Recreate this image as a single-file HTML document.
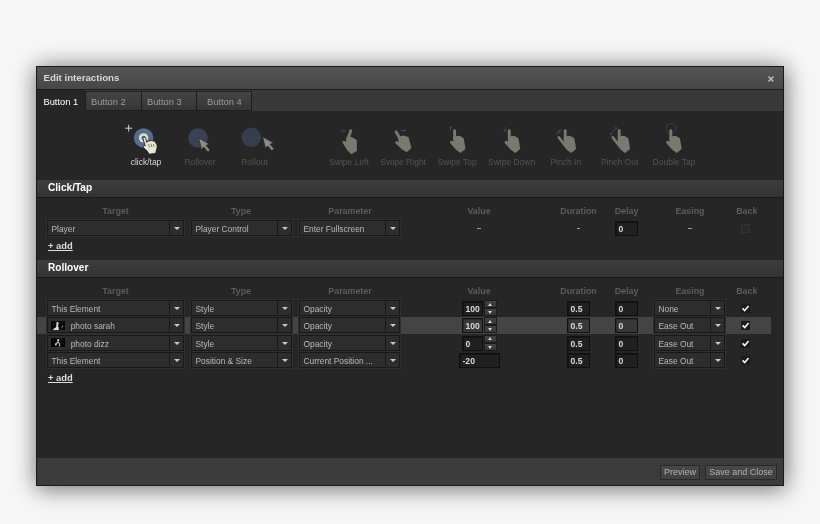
<!DOCTYPE html>
<html>
<head>
<meta charset="utf-8">
<style>
*{box-sizing:border-box;margin:0;padding:0}
html,body{width:820px;height:524px;overflow:hidden}
body{background:#f7f7f7;font-family:"Liberation Sans",sans-serif;font-size:8px;color:#c8c8c8;position:relative}
.abs{position:absolute}
#dlg{will-change:transform;position:absolute;left:36px;top:66px;width:748px;height:420px;background:#262626;border:1px solid #1a1a1a;box-shadow:1px 2px 22px 1px rgba(0,0,0,.55)}
#title{position:absolute;left:0;top:0;width:746px;height:23px;background:linear-gradient(#555,#474747);border-bottom:1px solid #1c1c1c}
#title span{position:absolute;left:6.5px;top:5px;font-weight:bold;font-size:9.7px;line-height:11px;color:#d8d8d8}
#tabs{position:absolute;left:0;top:23px;width:746px;height:21px;background:#393939}
.tab{position:absolute;top:1px;height:20px;background:linear-gradient(#444,#363636);border-left:1px solid #1e1e1e;border-top:1px solid #222;border-bottom:1px solid #1e1e1e;color:#9a9a9a;font-size:9.3px;line-height:20.5px;text-align:left;padding-left:5px;white-space:nowrap}
.tab.act{top:0;background:#262626;color:#fff;border:none;height:21px;padding-left:6.5px;line-height:25px}
#foot{position:absolute;left:0;top:391px;width:746px;height:27px;background:#3b3b3b}
.btn{position:absolute;top:7px;height:14.5px;border:1px solid #292929;background:linear-gradient(#484848,#404040);color:#b2b2b2;font-size:9px;line-height:13px;text-align:center;white-space:nowrap}
.sec{position:absolute;left:0;width:746px;height:18px;background:linear-gradient(#3e3e3e,#333);border-bottom:1px solid #1a1a1a;color:#fff;font-weight:bold;font-size:10.1px;line-height:16.5px;padding-left:11px}
.hd{position:absolute;font-weight:bold;font-size:8.9px;line-height:10px;color:#5c5c5c;text-align:center;width:80px;margin-left:-40px;white-space:nowrap}
.sel{position:absolute;height:16px;border:1px solid #191919;background:#2d2d2d;box-shadow:0 0 0 1px #2f2f2f;color:#b8b8b8;font-size:8.4px;line-height:16px;padding-left:3.5px;white-space:nowrap;overflow:hidden}
.sel i{position:absolute;right:0;top:0;width:14px;height:14px;border-left:1px solid #191919}
.sel i:after{content:"";position:absolute;left:3.5px;top:6px;border:3.5px solid transparent;border-top:3.5px solid #c8c8c8;border-bottom:none}
.inp{position:absolute;height:15px;border:1px solid #101010;background:#202020;box-shadow:inset 1px 1px 0 #141414;color:#dadada;font-weight:bold;font-size:8.6px;line-height:14.5px;padding-left:2.5px;white-space:nowrap}
.inp.hli{background:#383838;box-shadow:inset 1px 1px 0 #2c2c2c}
.add{position:absolute;left:11px;color:#dcdcdc;font-weight:bold;font-size:9.4px;line-height:10px;text-decoration:underline;white-space:nowrap}
.ico{position:absolute;font-size:8.5px;line-height:10px;text-align:center;width:70px;margin-left:-35px;top:90px;white-space:nowrap}

.spin{position:absolute;width:13px;height:16px}
.spin b,.spin u{position:absolute;left:0;width:13px;height:8px;background:linear-gradient(#424242,#363636);border:1px solid #1c1c1c}
.spin b{top:0}.spin u{top:8px}
.spin b:after{content:"";position:absolute;left:3px;top:1.5px;border:2.5px solid transparent;border-bottom:3px solid #cfcfcf;border-top:none}
.spin u:after{content:"";position:absolute;left:3px;top:2px;border:2.5px solid transparent;border-top:3px solid #cfcfcf;border-bottom:none}
.chk{position:absolute;width:9px;height:9px;background:#1b1b1b}
.chk.off{border:1px solid #343434;background:#2a2a2a}
.dash{position:absolute;width:3.5px;height:1.6px;background:#9c9c9c;margin-top:.8px}
.hl{position:absolute;left:0;width:734px;height:17.2px;background:#444}
.th{display:inline-block;width:14.5px;height:9px;vertical-align:top;margin:2.5px 5.5px 0 -0.8px}
</style>
</head>
<body>
<div id="dlg">
  <div id="title"><span>Edit interactions</span><svg class="abs" style="left:730.2px;top:8.2px" width="8" height="8" viewBox="0 0 8 8"><path d="M1.4,1.4 L6.4,6.4 M6.4,1.4 L1.4,6.4" stroke="#bebebe" stroke-width="1.4"/></svg></div>
  <div id="tabs">
    <div class="tab act" style="left:0;width:48px">Button 1</div>
    <div class="tab" style="left:48px;width:56px">Button 2</div>
    <div class="tab" style="left:104px;width:55px">Button 3</div>
    <div class="tab" style="left:159px;width:56px;border-right:1px solid #1e1e1e;padding-left:10px">Button 4</div>
  </div>
  <!--ICONS-->
  <svg class="abs" style="left:0;top:0" width="746" height="418" viewBox="37 67 746 418"><g stroke="#cfcfcf" stroke-width="1" fill="none"><path d="M125.2,128.2 H132.2 M128.7,124.7 V131.7"/></g>
  <circle cx="143.6" cy="137.9" r="9.7" fill="#586c8e"/>
  <circle cx="143.6" cy="137.9" r="4.7" fill="#dcdcd4"/>
  <circle cx="143.6" cy="137.9" r="2.1" fill="#586c8e"/>
  <g transform="translate(115,115)"><path d="M29.2,22.1 Q30.5,22 30.7,23.2 L31.7,27.3 Q33,25.6 34.6,26 Q36.4,24.9 37.6,25.8 Q39.6,25.6 40.3,27.2 Q42.4,29.4 42.2,32 L40.6,38.6 L33.6,39.2 L32.8,36.8 L29,33.2 Q27.4,31.4 28.6,30.6 Q29.6,30.2 30.2,31 L27.9,23.4 Q27.8,22.2 29.2,22.1 Z" fill="#e9e9d2" stroke="#1d1d1d" stroke-width="0.9" stroke-linejoin="round"/><path d="M33.6,29 L34.4,32.6 M36,28.6 L36.8,32.2 M38.4,28.8 L39,32" stroke="#555" stroke-width="0.7" fill="none"/></g>
  <circle cx="198" cy="137.9" r="9.7" fill="#3a4354"/>
  <path transform="translate(198.6,137.9)" d="M0,0 L2.9,11.5 L5.2,9.2 L9.2,14 L11.5,12 L7.4,7.4 L11,6.3 Z" fill="#8b8b82" stroke="#262626" stroke-width="0.7"/>
  <circle cx="251.3" cy="137.3" r="9.7" fill="#363e4d"/>
  <path transform="translate(262.6,136.8)" d="M0,0 L2.9,11.5 L5.2,9.2 L9.2,14 L11.5,12 L7.4,7.4 L11,6.3 Z" fill="#8b8b82" stroke="#262626" stroke-width="0.7"/>
  <g transform="translate(347.8,129.9)" fill="#787a70"><path transform="rotate(9 0 9)" d="M1.4,7 Q3,6 4.2,6.8 Q6,6.6 6.8,7.8 Q8.6,7.8 9.2,9.4 L10.8,19 Q10.8,20 9.7,20.6 L5.9,23.6 L1.5,20.4 L-4.6,13.6 Q-5,12 -3.8,11.6 Q-2.6,11.4 -1.4,12.6 L-1.4,7 Z"/><line x1="0" y1="9" x2="3.0" y2="0.7999999999999999" stroke="#787a70" stroke-width="2.9" stroke-linecap="round"/></g>
  <path d="M341.5,131 H346 M341.5,131 l1.5,-1.3 M341.5,131 l1.5,1.3" stroke="#3f4b63" stroke-width="0.9" fill="none"/>
  <g transform="translate(399.6,129.3)" fill="#787a70"><path transform="rotate(-5 0 9)" d="M1.4,7 Q3,6 4.2,6.8 Q6,6.6 6.8,7.8 Q8.6,7.8 9.2,9.4 L10.8,19 Q10.8,20 9.7,20.6 L5.9,23.6 L1.5,20.4 L-4.6,13.6 Q-5,12 -3.8,11.6 Q-2.6,11.4 -1.4,12.6 L-1.4,7 Z"/><line x1="0" y1="9" x2="-3.4" y2="2.5999999999999996" stroke="#787a70" stroke-width="2.9" stroke-linecap="round"/></g>
  <path d="M401,130.5 H405.5 M405.5,130.5 l-1.5,-1.3 M405.5,130.5 l-1.5,1.3" stroke="#3f4b63" stroke-width="0.9" fill="none"/>
  <g transform="translate(454.6,129.3)" fill="#787a70"><path d="M1.4,7 Q3,6 4.2,6.8 Q6,6.6 6.8,7.8 Q8.6,7.8 9.2,9.4 L10.8,19 Q10.8,20 9.7,20.6 L5.9,23.6 L1.5,20.4 L-4.6,13.6 Q-5,12 -3.8,11.6 Q-2.6,11.4 -1.4,12.6 L-1.4,7 Z"/><line x1="0" y1="9" x2="0" y2="1.4" stroke="#787a70" stroke-width="2.9" stroke-linecap="round"/></g>
  <path d="M450.6,126.5 V131 M450.6,126.5 l-1.2,1.4 M450.6,126.5 l1.2,1.4" stroke="#3f4b63" stroke-width="0.9" fill="none"/>
  <g transform="translate(509.3,129.3)" fill="#787a70"><path d="M1.4,7 Q3,6 4.2,6.8 Q6,6.6 6.8,7.8 Q8.6,7.8 9.2,9.4 L10.8,19 Q10.8,20 9.7,20.6 L5.9,23.6 L1.5,20.4 L-4.6,13.6 Q-5,12 -3.8,11.6 Q-2.6,11.4 -1.4,12.6 L-1.4,7 Z"/><line x1="0" y1="9" x2="0" y2="1.4" stroke="#787a70" stroke-width="2.9" stroke-linecap="round"/></g>
  <path d="M505.2,127 V131.5 M505.2,131.5 l-1.2,-1.4 M505.2,131.5 l1.2,-1.4" stroke="#3f4b63" stroke-width="0.9" fill="none"/>
  <g transform="translate(565.2,129.3)" fill="#787a70"><path d="M1.4,7 Q3,6 4.2,6.8 Q6,6.6 6.8,7.8 Q8.6,7.8 9.2,9.4 L10.8,19 Q10.8,20 9.7,20.6 L5.9,23.6 L1.5,20.4 L-3.2,14.5 L-7.6,8.6 Q-8,7.2 -6.8,6.8 Q-5.8,6.6 -5,7.8 L-1.4,12.4 L-1.4,7 Z"/><line x1="0" y1="9" x2="0" y2="1.4" stroke="#787a70" stroke-width="2.9" stroke-linecap="round"/></g>
  <path d="M556,135 L562,128.5 M558.2,132.6 l0.2,-1.8 M558.2,132.6 l1.8,-0.1 M560.2,130.6 l-1.8,0.1 M560.2,130.6 l-0.2,1.8" stroke="#3f4b63" stroke-width="0.8" fill="none"/>
  <g transform="translate(619.2,129.3)" fill="#787a70"><path d="M1.4,7 Q3,6 4.2,6.8 Q6,6.6 6.8,7.8 Q8.6,7.8 9.2,9.4 L10.8,19 Q10.8,20 9.7,20.6 L5.9,23.6 L1.5,20.4 L-3.2,14.5 L-7.6,8.6 Q-8,7.2 -6.8,6.8 Q-5.8,6.6 -5,7.8 L-1.4,12.4 L-1.4,7 Z"/><line x1="0" y1="9" x2="0" y2="1.4" stroke="#787a70" stroke-width="2.9" stroke-linecap="round"/></g>
  <path d="M610.5,134.5 L616.5,127.5 M610.5,134.5 l0.2,-1.8 M610.5,134.5 l1.8,-0.2 M616.5,127.5 l-1.8,0.2 M616.5,127.5 l-0.2,1.8" stroke="#3f4b63" stroke-width="0.8" fill="none"/>
  <circle cx="671.1" cy="128.4" r="4.9" fill="none" stroke="#3c475b" stroke-width="0.8"/>
  <g transform="translate(670.8,129.3)" fill="#787a70"><path d="M1.4,7 Q3,6 4.2,6.8 Q6,6.6 6.8,7.8 Q8.6,7.8 9.2,9.4 L10.8,19 Q10.8,20 9.7,20.6 L5.9,23.6 L1.5,20.4 L-4.6,13.6 Q-5,12 -3.8,11.6 Q-2.6,11.4 -1.4,12.6 L-1.4,7 Z"/><line x1="0" y1="9" x2="0" y2="1.4" stroke="#787a70" stroke-width="2.9" stroke-linecap="round"/></g></svg>
  <div class="ico" style="left:109px;color:#d6d6d6">click/tap</div><div class="ico" style="left:163px;color:#535353">Rollover</div><div class="ico" style="left:217.4px;color:#535353">Rollout</div><div class="ico" style="left:312px;color:#535353">Swipe Left</div><div class="ico" style="left:366.3px;color:#535353">Swipe Right</div><div class="ico" style="left:420.2px;color:#535353">Swipe Top</div><div class="ico" style="left:474.6px;color:#535353">Swipe Down</div><div class="ico" style="left:528.8px;color:#535353">Pinch In</div><div class="ico" style="left:582.6px;color:#535353">Pinch Out</div><div class="ico" style="left:637px;color:#535353">Double Tap</div>
  <!--/ICONS-->
  <div class="sec" style="top:113px">Click/Tap</div>
  <div class="sec" style="top:193px">Rollover</div>
  <!--ROWS-->
  <div class="hd" style="left:78.5px;top:139.3px">Target</div>
  <div class="hd" style="left:204px;top:139.3px">Type</div>
  <div class="hd" style="left:313px;top:139.3px">Parameter</div>
  <div class="hd" style="left:442px;top:139.3px">Value</div>
  <div class="hd" style="left:541.5px;top:139.3px">Duration</div>
  <div class="hd" style="left:589.5px;top:139.3px">Delay</div>
  <div class="hd" style="left:653px;top:139.3px">Easing</div>
  <div class="hd" style="left:709.8px;top:139.3px">Back</div>
  <div class="sel " style="left:10px;top:153px;width:137px">Player<i></i></div>
  <div class="sel " style="left:154px;top:153px;width:101px">Player Control<i></i></div>
  <div class="sel " style="left:262px;top:153px;width:101px">Enter Fullscreen<i></i></div>
  <div class="dash" style="left:440px;top:160px"></div>
  <div class="dash" style="left:539.5px;top:160px"></div>
  <div class="inp " style="left:578px;top:154px;width:23px">0</div>
  <div class="dash" style="left:651px;top:160px"></div>
  <div class="chk off" style="left:704px;top:157px"></div>
  <div class="add" style="top:174px">+ add</div>
  <div class="hd" style="left:78.5px;top:219.3px">Target</div>
  <div class="hd" style="left:204px;top:219.3px">Type</div>
  <div class="hd" style="left:313px;top:219.3px">Parameter</div>
  <div class="hd" style="left:442px;top:219.3px">Value</div>
  <div class="hd" style="left:541.5px;top:219.3px">Duration</div>
  <div class="hd" style="left:589.5px;top:219.3px">Delay</div>
  <div class="hd" style="left:653px;top:219.3px">Easing</div>
  <div class="hd" style="left:709.8px;top:219.3px">Back</div>
  <div class="hl" style="top:249.6px"></div>
  <div class="sel " style="left:10px;top:233px;width:137px">This Element<i></i></div>
  <div class="sel " style="left:154px;top:233px;width:101px">Style<i></i></div>
  <div class="sel " style="left:262px;top:233px;width:101px">Opacity<i></i></div>
  <div class="inp " style="left:425px;top:234px;width:21px">100</div>
  <div class="spin" style="left:447px;top:233px"><b></b><u></u></div>
  <div class="inp " style="left:530px;top:234px;width:23px">0.5</div>
  <div class="inp " style="left:578px;top:234px;width:23px">0</div>
  <div class="sel " style="left:617px;top:233px;width:71px">None<i></i></div>
  <div class="chk" style="left:704px;top:237px"><svg width="9" height="9" viewBox="0 0 9 9"><path d="M1.6 4.4 L3.7 6.6 L7.6 2" stroke="#f0f0f0" stroke-width="1.7" fill="none"/></svg></div>
  <div class="sel " style="left:10px;top:250px;width:137px"><svg class="th" viewBox="0 0 14.5 9"><rect width="14.5" height="9" fill="#080808"/><path d="M6.4,0.8 Q7.6,0.9 7.6,2.2 Q7.6,3.4 7,4.2 Q7.6,6 8,9 L1.8,9 Q2.6,7 4.8,6.4 Q5.6,5 5.4,3 Q5.2,0.9 6.4,0.8 Z" fill="#d8d8d8"/><path d="M10.4,7.4 L11.6,5" stroke="#999" stroke-width="0.7"/><circle cx="11.6" cy="5" r="0.6" fill="#aaa"/></svg>photo sarah<i></i></div>
  <div class="sel " style="left:154px;top:250px;width:101px">Style<i></i></div>
  <div class="sel " style="left:262px;top:250px;width:101px">Opacity<i></i></div>
  <div class="inp hli" style="left:425px;top:251px;width:21px">100</div>
  <div class="spin" style="left:447px;top:250px"><b></b><u></u></div>
  <div class="inp hli" style="left:530px;top:251px;width:23px">0.5</div>
  <div class="inp hli" style="left:578px;top:251px;width:23px">0</div>
  <div class="sel " style="left:617px;top:250px;width:71px">Ease Out<i></i></div>
  <div class="chk" style="left:704px;top:254px"><svg width="9" height="9" viewBox="0 0 9 9"><path d="M1.6 4.4 L3.7 6.6 L7.6 2" stroke="#f0f0f0" stroke-width="1.7" fill="none"/></svg></div>
  <div class="sel " style="left:10px;top:267.5px;width:137px"><svg class="th" viewBox="0 0 14.5 9"><rect width="14.5" height="9" fill="#050505"/><circle cx="7.3" cy="2" r="1.1" fill="#d0d0d0"/><path d="M7.4,2.8 L6,5 L4.2,6.4 M7,4 L8.6,6 L8.6,8.4" stroke="#bdbdbd" stroke-width="1.1" fill="none"/><circle cx="4.8" cy="6.4" r="1" fill="#c8c8c8"/><circle cx="10.3" cy="0.9" r="0.5" fill="#999"/></svg>photo dizz<i></i></div>
  <div class="sel " style="left:154px;top:267.5px;width:101px">Style<i></i></div>
  <div class="sel " style="left:262px;top:267.5px;width:101px">Opacity<i></i></div>
  <div class="inp " style="left:425px;top:268.5px;width:21px">0</div>
  <div class="spin" style="left:447px;top:267.5px"><b></b><u></u></div>
  <div class="inp " style="left:530px;top:268.5px;width:23px">0.5</div>
  <div class="inp " style="left:578px;top:268.5px;width:23px">0</div>
  <div class="sel " style="left:617px;top:267.5px;width:71px">Ease Out<i></i></div>
  <div class="chk" style="left:704px;top:271.5px"><svg width="9" height="9" viewBox="0 0 9 9"><path d="M1.6 4.4 L3.7 6.6 L7.6 2" stroke="#f0f0f0" stroke-width="1.7" fill="none"/></svg></div>
  <div class="sel " style="left:10px;top:284.6px;width:137px">This Element<i></i></div>
  <div class="sel " style="left:154px;top:284.6px;width:101px">Position &amp; Size<i></i></div>
  <div class="sel " style="left:262px;top:284.6px;width:101px">Current Position ...<i></i></div>
  <div class="inp " style="left:422px;top:285.6px;width:41px">-20</div>
  <div class="inp " style="left:530px;top:285.6px;width:23px">0.5</div>
  <div class="inp " style="left:578px;top:285.6px;width:23px">0</div>
  <div class="sel " style="left:617px;top:284.6px;width:71px">Ease Out<i></i></div>
  <div class="chk" style="left:704px;top:288.6px"><svg width="9" height="9" viewBox="0 0 9 9"><path d="M1.6 4.4 L3.7 6.6 L7.6 2" stroke="#f0f0f0" stroke-width="1.7" fill="none"/></svg></div>
  <div class="add" style="top:306px">+ add</div>
  <!--/ROWS-->
  <div id="foot">
    <div class="btn" style="left:623px;width:40px">Preview</div>
    <div class="btn" style="left:668px;width:72px">Save and Close</div>
  </div>
</div>
</body>
</html>
